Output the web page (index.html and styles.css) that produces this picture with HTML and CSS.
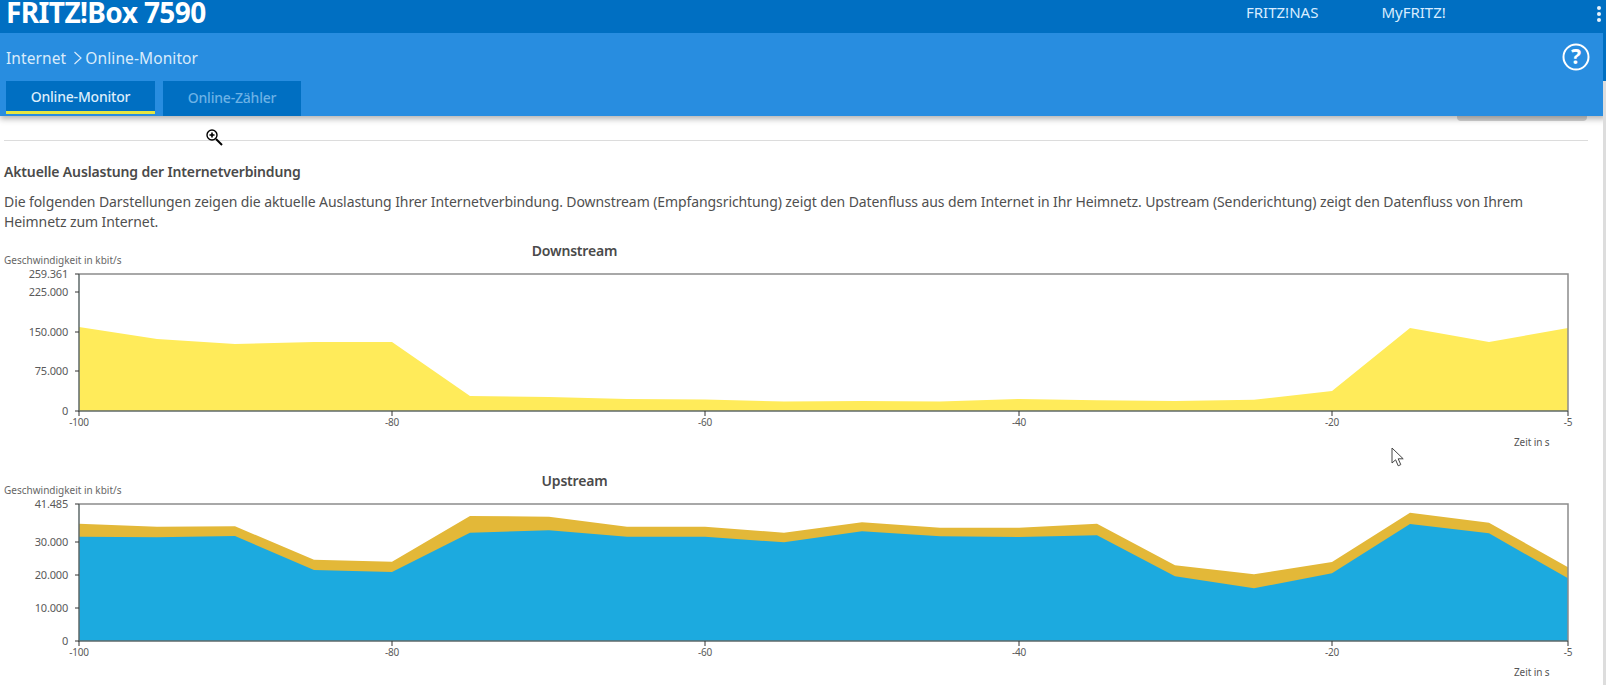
FILE: index.html
```html
<!DOCTYPE html>
<html lang="de">
<head>
<meta charset="utf-8">
<title>FRITZ!Box 7590 - Online-Monitor</title>
<link rel="stylesheet" href="styles.css">
</head>
<body>
<header class="head">
  <div class="topbar">
    <div class="brand">FRITZ!Box 7590</div>
    <nav class="toplinks">
      <a class="toplink">FRITZ!NAS</a>
      <a class="toplink">MyFRITZ!</a>
    </nav>
    <svg class="dots" width="6" height="18" viewBox="0 0 6 18"><circle cx="3" cy="3" r="2"/><circle cx="3" cy="9" r="2"/><circle cx="3" cy="15" r="2"/></svg>
  </div>
  <div class="subbar">
    <div class="crumbrow">
      <div class="crumbs"><span>Internet</span><svg class="chev" width="10" height="16" viewBox="0 0 10 16"><path d="M1.5 2 8 8 1.5 14"/></svg><span>Online-Monitor</span></div>
      <svg class="help" width="32" height="32" viewBox="0 0 32 32"><circle class="help-ring" cx="16" cy="16" r="12.5"/><text class="help-q" x="16" y="23">?</text></svg>
    </div>
    <div class="tabs">
      <a class="tab tab-on">Online-Monitor</a>
      <a class="tab">Online-Zähler</a>
    </div>
  </div>
</header>
<div class="scrollbar"></div>
<main class="page">
  <div class="greybtn"></div>
  <hr class="rule">
  <h1 class="title">Aktuelle Auslastung der Internetverbindung</h1>
  <p class="intro">Die folgenden Darstellungen zeigen die aktuelle Auslastung Ihrer Internetverbindung. Downstream (Empfangsrichtung) zeigt den Datenfluss aus dem Internet in Ihr Heimnetz. Upstream (Senderichtung) zeigt den Datenfluss von Ihrem Heimnetz zum Internet.</p>

  <section class="chart chart-down">
    <h2 class="chart-title">Downstream</h2>
    <svg class="plot" width="1606" height="192" viewBox="0 0 1606 192">
      <text class="unit" x="4" y="20">Geschwindigkeit in kbit/s</text>
      <polygon class="yellow" points="79,167 79,83 157,95 235,100 314,98 392,98 470,152 549,153 627,155 705,155.5 784,157.5 862,157 940,157.5 1019,155 1097,156.3 1175,157 1254,155.7 1332,147 1410,84 1489,98 1568,84 1568,167"/>
      <path class="frame-light" d="M79 30H1568V167"/>
      <path class="frame-dark" d="M79 30V167H1568"/>
      <path class="ticks" d="M75 30h4M75 48h4M75 88h4M75 127h4M75 167h4M79 167v5M392 167v5M705 167v5M1019 167v5M1332 167v5M1568 167v5"/>
      <text class="ylab" x="68" y="34">259.361</text>
      <text class="ylab" x="68" y="52">225.000</text>
      <text class="ylab" x="68" y="92">150.000</text>
      <text class="ylab" x="68" y="131">75.000</text>
      <text class="ylab" x="68" y="171">0</text>
      <text class="xlab" x="79" y="182">-100</text>
      <text class="xlab" x="392" y="182">-80</text>
      <text class="xlab" x="705" y="182">-60</text>
      <text class="xlab" x="1019" y="182">-40</text>
      <text class="xlab" x="1332" y="182">-20</text>
      <text class="xlab" x="1568" y="182">-5</text>
    </svg>
    <div class="xunit">Zeit in s</div>
  </section>

  <section class="chart chart-up">
    <h2 class="chart-title">Upstream</h2>
    <svg class="plot" width="1606" height="192" viewBox="0 0 1606 192">
      <text class="unit" x="4" y="20">Geschwindigkeit in kbit/s</text>
      <polygon class="gold" points="79,49.7 157,52.7 235,52.3 314,85.7 392,87.7 470,42 549,42.7 627,52.7 705,52.7 784,58.7 862,48.3 940,53.7 1019,53.7 1097,49.7 1175,91.3 1254,100.3 1332,88 1410,38.7 1489,48.7 1568,93.3 1568,167 79,167"/>
      <polygon class="blue" points="79,62.7 157,63.3 235,62 314,96 392,98 470,58.7 549,56.3 627,62.7 705,62.7 784,68.3 862,57.3 940,62.3 1019,63 1097,61.3 1175,102.3 1254,114.3 1332,99.3 1410,50 1489,59.3 1568,104.3 1568,167 79,167"/>
      <path class="frame-light" d="M79 30H1568V167"/>
      <path class="frame-dark" d="M79 30V167H1568"/>
      <path class="ticks" d="M75 30h4M75 68h4M75 101h4M75 134h4M75 167h4M79 167v5M392 167v5M705 167v5M1019 167v5M1332 167v5M1568 167v5"/>
      <text class="ylab" x="68" y="34">41.485</text>
      <text class="ylab" x="68" y="72">30.000</text>
      <text class="ylab" x="68" y="105">20.000</text>
      <text class="ylab" x="68" y="138">10.000</text>
      <text class="ylab" x="68" y="171">0</text>
      <text class="xlab" x="79" y="182">-100</text>
      <text class="xlab" x="392" y="182">-80</text>
      <text class="xlab" x="705" y="182">-60</text>
      <text class="xlab" x="1019" y="182">-40</text>
      <text class="xlab" x="1332" y="182">-20</text>
      <text class="xlab" x="1568" y="182">-5</text>
    </svg>
    <div class="xunit">Zeit in s</div>
  </section>
</main>

<svg class="cursor cursor-zoom" width="20" height="20" viewBox="0 0 20 20"><circle cx="7" cy="7" r="5" fill="#fff" stroke="#000" stroke-width="1.4"/><path d="M4.5 7h5M7 4.5v5" stroke="#000" stroke-width="1.6"/><path d="M11 11l6 6" stroke="#000" stroke-width="2"/></svg>
<svg class="cursor cursor-arrow" width="16" height="22" viewBox="0 0 16 22"><path d="M1 1v15l3.6-3.2 2.6 6 2.6-1.2-2.6-5.8h5z" fill="#fff" stroke="#444" stroke-width="1"/></svg>
</body>
</html>
```
FILE: styles.css
```css
html, body { margin: 0; padding: 0; height: 100%; overflow: hidden; background: #fff; }
body { font-family: "Noto Sans", "Liberation Sans", sans-serif; color: #4a4a4a; }

.head { position: relative; z-index: 2; box-shadow: 0 3px 6px rgba(0,0,0,.3); }
.topbar { height: 33px; background: #006fc2; display: flex; align-items: center; color: #fff; overflow: hidden; }
.brand { margin-left: 6px; font-size: 28px; font-weight: 700; line-height: 24px; letter-spacing: -.6px; margin-top: -9px; width: 1240px; }
.toplinks { display: flex; gap: 63px; margin-bottom: 10px; }
.toplink { font-size: 15px; color: #d8ecff; }
.dots { margin-left: auto; margin-right: 4px; margin-bottom: 6px; fill: #e8f3fc; }

.subbar { height: 83px; background: #288de0; color: #d9ebfb; display: flex; flex-direction: column; }
.crumbrow { height: 48px; display: flex; align-items: center; padding: 0 6px; justify-content: space-between; }
.crumbs { display: flex; align-items: center; font-size: 15.5px; letter-spacing: .1px; padding-top: 1px; }
.chev { fill: none; stroke: #d9ebfb; stroke-width: 1.2; margin: 0 2px 0 7px; }
.help { margin-right: 8px; }
.help-ring { fill: none; stroke: #fff; stroke-width: 2; }
.help-q { fill: #fff; font-size: 21px; font-weight: 700; text-anchor: middle; }

.tabs { display: flex; gap: 8px; padding-left: 6px; align-items: flex-start; }
.tab { height: 35px; box-sizing: border-box; background: #006fc2; color: #6cb2e6; font-size: 14px; font-weight: 500; display: flex; align-items: center; justify-content: center; letter-spacing: -.2px; width: 138px; padding-bottom: 2px; }
.tab-on { width: 149px; height: 33px; color: #dcedfb; border-bottom: 3px solid #e6e640; padding: 1px 0 0; }

.scrollbar { position: absolute; z-index: 3; right: 0; top: 0; width: 3px; height: 81px; background: #006fc2; }
.scrollbar::after { content: ""; position: absolute; left: 0; top: 81px; width: 3px; height: 604px; background: #ddd; }

.greybtn { width: 130px; height: 5px; margin-left: 1457px; background: #d4d4d4; border-radius: 0 0 4px 4px; }
.rule { margin: 19px 18px 0 4px; border: 0; border-top: 1px solid #dcdcdc; }
.title { margin: 21px 0 0 4px; font-size: 14px; line-height: 20px; font-weight: 600; letter-spacing: -.15px; color: #4a4a4a; }
.intro { margin: 10px 40px 0 4px; font-size: 14px; line-height: 20px; color: #505050; letter-spacing: -.09px; }
.chart-down { margin-top: 9px; }
.chart-up { margin-top: 22px; }
.chart-title { width: 1149px; margin: 0 0 -17px; text-align: center; font-size: 14px; line-height: 20px; font-weight: 600; color: #4a4a4a; letter-spacing: -.2px; }
.plot { display: block; font-family: "Noto Sans", "Liberation Sans", sans-serif; }
.unit { font-size: 10px; fill: #666; }
.ylab { font-size: 11px; fill: #5a5a5a; text-anchor: end; letter-spacing: -.2px; }
.xlab { font-size: 10px; fill: #5a5a5a; text-anchor: middle; letter-spacing: -.2px; }
.yellow { fill: #ffeb5a; }
.gold { fill: #e3b838; }
.blue { fill: #1caadf; }
.frame-light { fill: none; stroke: #8c8c8c; stroke-width: 1.5; }
.frame-dark { fill: none; stroke: #5f6a6a; stroke-width: 1.5; }
.ticks { fill: none; stroke: #333; stroke-width: 1; }
.xunit { margin: -1px 0 0 1514px; font-size: 10px; line-height: 14px; color: #555; letter-spacing: -.1px; height: 14px; }

.cursor { position: absolute; z-index: 5; }
.cursor-zoom { left: 205px; top: 128px; }
.cursor-arrow { left: 1391px; top: 447px; }
```
